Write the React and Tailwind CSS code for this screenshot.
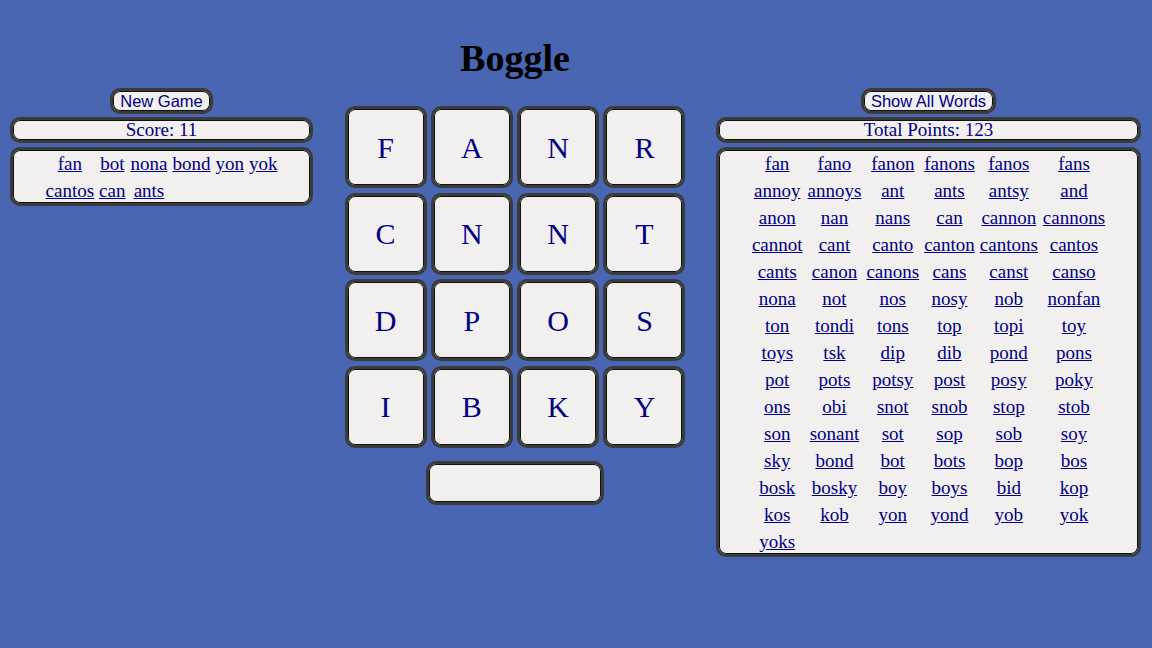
import React from "react";

const box = "border-[3px] border-[#3b3b3b] shadow-[inset_0_0_0_1px_#111] bg-[#f2efef]";

const allWords = [
  ["fan", "fano", "fanon", "fanons", "fanos", "fans"],
  ["annoy", "annoys", "ant", "ants", "antsy", "and"],
  ["anon", "nan", "nans", "can", "cannon", "cannons"],
  ["cannot", "cant", "canto", "canton", "cantons", "cantos"],
  ["cants", "canon", "canons", "cans", "canst", "canso"],
  ["nona", "not", "nos", "nosy", "nob", "nonfan"],
  ["ton", "tondi", "tons", "top", "topi", "toy"],
  ["toys", "tsk", "dip", "dib", "pond", "pons"],
  ["pot", "pots", "potsy", "post", "posy", "poky"],
  ["ons", "obi", "snot", "snob", "stop", "stob"],
  ["son", "sonant", "sot", "sop", "sob", "soy"],
  ["sky", "bond", "bot", "bots", "bop", "bos"],
  ["bosk", "bosky", "boy", "boys", "bid", "kop"],
  ["kos", "kob", "yon", "yond", "yob", "yok"],
  ["yoks"],
];

const myWords = [
  ["fan", "bot", "nona", "bond", "yon", "yok"],
  ["cantos", "can", "ants"],
];

const letters = ["F", "A", "N", "R", "C", "N", "N", "T", "D", "P", "O", "S", "I", "B", "K", "Y"];

function WordTable({ rows }) {
  return (
    <table className="mx-auto border-separate border-spacing-[2px]">
      <tbody>
        {rows.map((r, i) => (
          <tr key={i}>
            {r.map((w, j) => (
              <td key={j} className="px-[1.5px] py-[1px] text-center leading-[23px]">
                <a href="#" className="underline text-[#000080]">{w}</a>
              </td>
            ))}
          </tr>
        ))}
      </tbody>
    </table>
  );
}

function Btn({ children }) {
  return (
    <button
      className={`${box} rounded-[10px] px-[7px] h-[26px] text-[16.5px] leading-[18px] text-[#000080] font-['Liberation_Sans',Arial,sans-serif]`}
    >
      {children}
    </button>
  );
}

export default function App() {
  return (
    <div className="w-[1152px] h-[648px] bg-[#4966b3] font-['Liberation_Serif','Times_New_Roman',serif] text-[19px] text-[#000080] overflow-hidden">
      <div className="flex items-start pl-[10px]">
        {/* left column */}
        <div className="w-[303px] mt-[88px] flex flex-col items-center">
          <Btn>New Game</Btn>
          <div className={`${box} rounded-[10px] w-full mt-[3px] h-[26px] leading-[20px] text-center`}>Score: 11</div>
          <div className={`${box} rounded-[10px] w-full mt-[4px] h-[59px]`}>
            <div className="-mt-[1px]">
              <WordTable rows={myWords} />
            </div>
          </div>
        </div>

        {/* center column */}
        <div className="w-[342px] ml-[31px] flex flex-col items-center">
          <h1 className="mt-[36px] h-[44px] leading-[44px] text-[38px] font-bold text-black">Boggle</h1>
          <div className="mt-[26px] grid grid-cols-[repeat(4,82px)] gap-x-[4.33px] gap-y-[4.67px]">
            {letters.map((l, i) => (
              <div
                key={i}
                className={`${box} rounded-[10px] w-[82px] h-[82px] flex items-center justify-center text-[30px] text-[#000080]`}
              >
                {l}
              </div>
            ))}
          </div>
          <div className={`${box} rounded-[10px] mt-[13px] w-[178px] h-[44px]`}></div>
        </div>

        {/* right column */}
        <div className="w-[425px] ml-[30px] mt-[88px] flex flex-col items-center">
          <Btn>Show All Words</Btn>
          <div className={`${box} rounded-[10px] w-full mt-[3px] h-[26px] leading-[20px] text-center`}>Total Points: 123</div>
          <div className={`${box} rounded-[10px] w-full mt-[4px] h-[410px]`}>
            <div className="-mt-[1px]">
              <WordTable rows={allWords} />
            </div>
          </div>
        </div>
      </div>
    </div>
  );
}
